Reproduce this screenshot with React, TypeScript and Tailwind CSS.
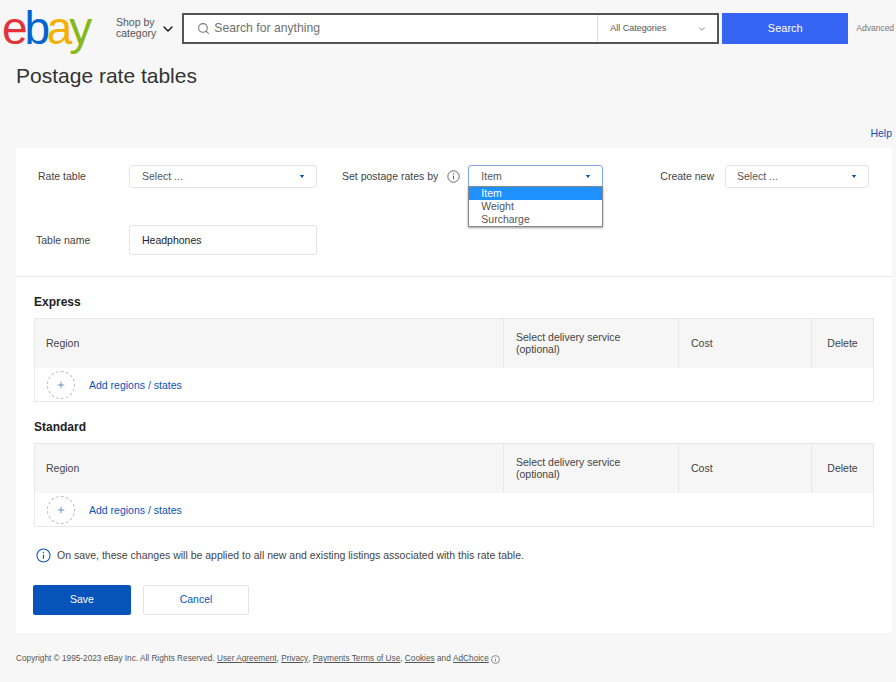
import { ChevronDown, Plus, Search } from "lucide-react";

const InfoIcon = ({ className }: { className: string }) => (
  <svg viewBox="0 0 16 16" fill="none" stroke="currentColor" strokeWidth="1.1" className={className}>
    <circle cx="8" cy="8" r="7" />
    <path d="M8 7v4.5" strokeWidth="1.2" />
    <circle cx="8" cy="4.8" r="0.7" fill="currentColor" stroke="none" />
  </svg>
);

const Caret = () => (
  <svg viewBox="0 0 6 4" className="h-[3px] w-[6px] fill-[#0654ba]">
    <path d="M0 0h6L3 4z" />
  </svg>
);

const SelectBox = ({ label, className }: { label: string; className: string }) => (
  <div className={`flex h-[23px] items-center justify-between rounded-[3px] border border-[#e5e5e5] bg-white pr-[11px] text-[#555] ${className}`}>
    <span>{label}</span>
    <Caret />
  </div>
);

const RateTable = ({ title }: { title: string }) => (
  <section className="mx-[18px]">
    <h2 className="h-[17px] text-[12px] leading-[17px] font-bold text-[#222]">{title}</h2>
    <div className="mt-[7px] border border-[#e8e8e8]">
      <div className="flex h-[49px] items-center bg-[#f6f6f6] text-[#444]">
        <div className="flex h-full w-[468px] items-center pl-[11px]">Region</div>
        <div className="flex h-full w-[175px] items-center border-l border-[#e8e8e8] pb-[2px] pl-[12px] leading-[12px]">
          Select delivery service<br />(optional)
        </div>
        <div className="flex h-full w-[133px] items-center border-l border-[#e8e8e8] pl-[12px]">Cost</div>
        <div className="flex h-full flex-1 items-center justify-center border-l border-[#e8e8e8]">Delete</div>
      </div>
      <div className="flex h-[33px] items-center pl-[12px]">
        <div className="flex h-[28px] w-[28px] items-center justify-center rounded-full border border-dashed border-[#bbb] text-[#0654ba]">
          <Plus className="h-[10px] w-[10px]" strokeWidth={1.4} />
        </div>
        <a className="mt-[2px] ml-[14px] text-[#0654ba]">Add regions / states</a>
      </div>
    </div>
  </section>
);

export default function App() {
  return (
    <div className="h-[682px] w-[896px] overflow-hidden bg-[#f7f7f7] font-['Liberation_Sans',Arial,sans-serif] text-[10.5px]">
      <header className="flex h-[44px] items-end pl-[2px]">
        <div className="flex h-[33px] w-[91px] items-center text-[46px] leading-none tracking-[-3.2px]">
          <span className="text-[#e53238]">e</span>
          <span className="text-[#0064d2]">b</span>
          <span className="text-[#f5af02]">a</span>
          <span className="text-[#86b817]">y</span>
        </div>
        <div className="ml-[23px] flex h-[31px] items-center text-[10.5px] leading-[11px] text-[#555]">
          <span className="pb-[2px]">Shop by<br />category</span>
          <ChevronDown className="ml-[4px] h-[16px] w-[16px] text-[#111]" />
        </div>
        <div className="ml-[6px] flex h-[31px] w-[537px] items-center border-2 border-[#555] bg-white">
          <Search className="ml-[13px] h-[13px] w-[13px] text-[#777]" />
          <span className="ml-[4px] flex-1 text-[12.2px] text-[#707070]">Search for anything</span>
          <div className="flex h-full w-[120px] items-center justify-between border-l border-[#ddd] pl-[12px] pr-[10px] text-[9px] text-[#555]">
            All Categories
            <ChevronDown className="h-[10px] w-[10px] text-[#777]" />
          </div>
        </div>
        <button className="ml-[3px] h-[31px] w-[126px] bg-[#3665f3] text-[11px] text-white">Search</button>
        <a className="ml-[8px] flex h-[31px] items-center text-[8.5px] text-[#777]">Advanced</a>
      </header>

      <h1 className="mt-[17px] ml-[16px] h-[29px] text-[21px] leading-[29px] text-[#333]">Postage rate tables</h1>

      <div className="mt-[40px] flex h-[7px] items-center justify-end pr-[4px] text-[#0654ba]">
        <a>Help</a>
      </div>

      <main className="mt-[11px] ml-[16px] h-[485px] w-[876px] bg-white">
        <div className="flex h-[129px] flex-col border-b border-[#e8e8e8] pt-[17px]">
          <div className="flex items-center text-[#444]">
            <span className="ml-[22px] w-[91px]">Rate table</span>
            <SelectBox label="Select ..." className="w-[188px] pl-[12px]" />
            <span className="ml-[25px]">Set postage rates by</span>
            <InfoIcon className="ml-[9px] h-[13px] w-[13px] text-[#555]" />
            <div className="relative ml-[8px] w-[135px]">
              <SelectBox label="Item" className="w-full !rounded-b-none !border-[#7fa8e0] pl-[12px]" />
              <div className="absolute top-[21px] left-0 z-10 w-full border border-[#888] bg-white leading-[13px] text-[#555] shadow-[0_1px_2px_rgba(0,0,0,0.4)]">
                <div className="bg-[#1e90ff] pl-[12px] text-white">Item</div>
                <div className="pl-[12px]">Weight</div>
                <div className="pl-[12px]">Surcharge</div>
              </div>
            </div>
            <span className="ml-[57px]">Create new</span>
            <SelectBox label="Select ..." className="ml-[11px] w-[144px] pl-[11px]" />
          </div>
          <div className="mt-[37px] flex items-center text-[#444]">
            <span className="ml-[20px] w-[93px] pt-[1px]">Table name</span>
            <div className="flex h-[30px] w-[188px] items-center rounded-[2px] border border-[#e5e5e5] pt-[1px] pl-[12px] text-[#222]">
              Headphones
            </div>
          </div>
        </div>

        <div className="pt-[17px]">
          <RateTable title="Express" />
        </div>
        <div className="pt-[17px]">
          <RateTable title="Standard" />
        </div>

        <div className="mt-[21px] ml-[20px] flex items-center text-[#444]">
          <InfoIcon className="h-[15px] w-[15px] text-[#0654ba]" />
          <span className="ml-[6px]">On save, these changes will be applied to all new and existing listings associated with this rate table.</span>
        </div>

        <div className="mt-[21px] ml-[17px] flex">
          <button className="h-[30px] w-[98px] rounded-[2px] bg-[#0654ba] text-white">Save</button>
          <button className="ml-[12px] h-[30px] w-[106px] rounded-[2px] border border-[#e5e5e5] bg-white pt-[1px] text-[#0654ba]">Cancel</button>
        </div>
      </main>

      <footer className="mt-[20px] ml-[16px] flex items-center text-[8.25px] text-[#555]">
        <span>Copyright © 1995-2023 eBay Inc. All Rights Reserved.&nbsp;</span>
        <a className="underline">User Agreement</a>,&nbsp;
        <a className="underline">Privacy</a>,&nbsp;
        <a className="underline">Payments Terms of Use</a>,&nbsp;
        <a className="underline">Cookies</a>&nbsp;and&nbsp;
        <a className="underline">AdChoice</a>
        <InfoIcon className="ml-[2px] h-[9px] w-[9px]" />
      </footer>
    </div>
  );
}
